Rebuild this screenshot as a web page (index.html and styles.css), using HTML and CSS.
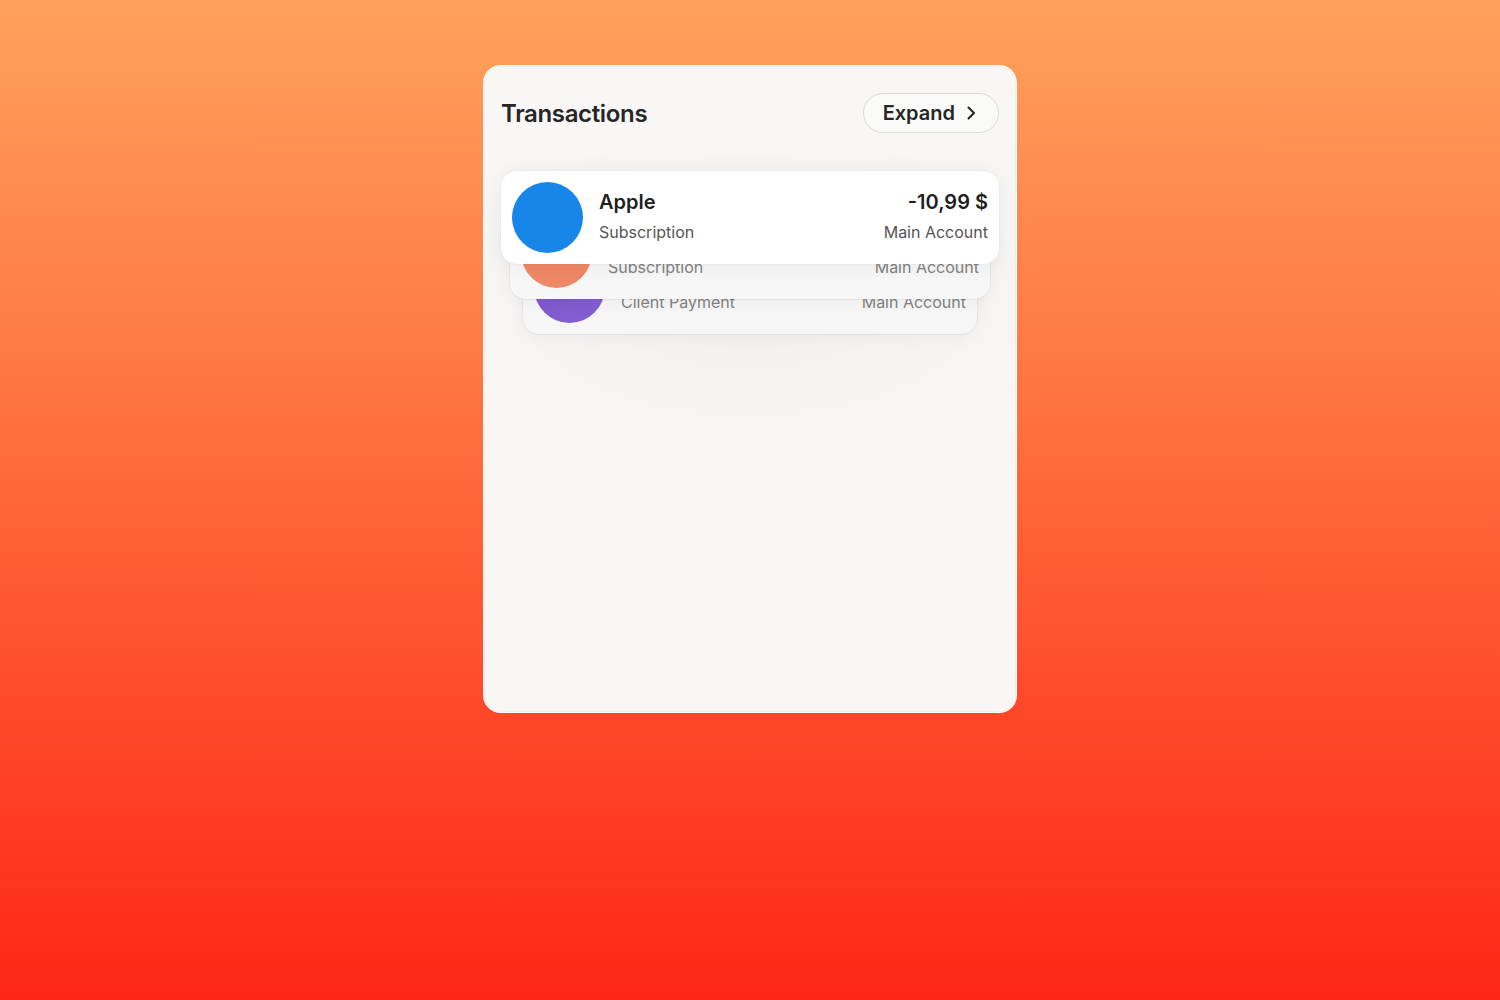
FILE: index.html
```html
<!DOCTYPE html>
<html lang="en">
<head>
<meta charset="utf-8">
<title>Transactions</title>
<link rel="stylesheet" href="styles.css">
</head>
<body>
  <main class="panel">
    <header class="panel-head">
      <h1 class="panel-title">Transactions</h1>
      <button class="expand-btn" type="button">
        <span>Expand</span>
        <svg class="chev" width="12" height="16" viewBox="0 0 12 16" aria-hidden="true"><path d="M3.5 2.5 L9 8 L3.5 13.5" fill="none" stroke="#222" stroke-width="2" stroke-linecap="round" stroke-linejoin="round"/></svg>
      </button>
    </header>
    <section class="stack">
      <article class="tx tx-back2">
        <span class="avatar avatar-purple"></span>
        <div class="tx-main"><span class="tx-name">Freelance</span><span class="tx-sub">Client Payment</span></div>
        <div class="tx-side"><span class="tx-amt">+450,00 $</span><span class="tx-sub">Main Account</span></div>
      </article>
      <article class="tx tx-back1">
        <span class="avatar avatar-orange"></span>
        <div class="tx-main"><span class="tx-name">Spotify</span><span class="tx-sub">Subscription</span></div>
        <div class="tx-side"><span class="tx-amt">-9,99 $</span><span class="tx-sub">Main Account</span></div>
      </article>
      <article class="tx tx-front">
        <span class="avatar avatar-blue"></span>
        <div class="tx-main"><span class="tx-name">Apple</span><span class="tx-sub">Subscription</span></div>
        <div class="tx-side"><span class="tx-amt">-10,99 $</span><span class="tx-sub">Main Account</span></div>
      </article>
    </section>
  </main>
</body>
</html>
```
FILE: styles.css
```css
* { box-sizing: border-box; }
html, body { height: 100%; }
body {
  margin: 0;
  min-height: 1000px;
  background: linear-gradient(180deg, #ffa15b 0%, #ff7a44 35%, #ff4a2a 70%, #fe2616 100%);
  font-family: Inter, "Noto Sans", "Liberation Sans", sans-serif;
  color: #222;
}
.panel {
  width: 534px;
  height: 648px;
  margin: 65px auto 0;
  background: #f8f7f6;
  border: 1px solid rgba(255,255,255,0.75);
  border-radius: 18px;
  padding: 27px 17px;
  background-image: radial-gradient(ellipse 340px 170px at 50% 230px, rgba(0,0,0,0.03), rgba(0,0,0,0) 100%);
  box-shadow: inset 0 0 0 1px rgba(0,0,0,0.03);
}
.panel-head {
  display: flex;
  align-items: center;
  justify-content: space-between;
  height: 40px;
}
.panel-title {
  margin: 0;
  font-size: 24px;
  font-weight: 600;
  letter-spacing: -0.35px;
  color: #262626;
}
.expand-btn {
  display: flex;
  align-items: center;
  gap: 10px;
  height: 40px;
  padding: 0 21px 0 19px;
  border: 1px solid #dcdbda;
  border-radius: 20px;
  background: rgba(255,255,255,0.35);
  font-family: inherit;
  font-size: 20px;
  font-weight: 600;
  color: #262626;
}
.chev { display: block; }
.stack {
  display: grid;
  margin-top: 38px;
}
.tx {
  grid-area: 1 / 1;
  display: flex;
  align-items: center;
  height: 93px;
  padding: 11px;
  border-radius: 16px;
  background: #fff;
}
.tx-front {
  z-index: 3;
  box-shadow: 0 2px 22px rgba(0,0,0,0.06), 0 0 0 1px rgba(0,0,0,0.02);
}
.tx-back1 {
  z-index: 2;
  margin: 35px 9px 0;
  background: #f7f7f7;
  box-shadow: 0 3px 18px rgba(0,0,0,0.045), 0 0 0 1px rgba(0,0,0,0.045);
}
.tx-back2 {
  z-index: 1;
  margin: 70px 22px 0;
  background: #f6f6f6;
  box-shadow: 0 3px 18px rgba(0,0,0,0.04), 0 0 0 1px rgba(0,0,0,0.045);
}
.tx-back1 .tx-sub, .tx-back2 .tx-sub { color: #828282; }
.tx-back1 .tx-name, .tx-back1 .tx-amt,
.tx-back2 .tx-name, .tx-back2 .tx-amt { visibility: hidden; }
.avatar {
  flex: none;
  width: 71px;
  height: 71px;
  border-radius: 50%;
}
.avatar-blue { background: #1786e8; }
.avatar-orange { background: #ef8866; }
.avatar-purple { background: linear-gradient(135deg, #7a54cc, #8660d2); }
.tx-main, .tx-side {
  display: flex;
  flex-direction: column;
  gap: 8px;
  padding-bottom: 3px;
}
.tx-main { margin-left: 16px; flex: 1; }
.tx-side { align-items: flex-end; }
.tx-name, .tx-amt {
  font-size: 20px;
  font-weight: 600;
  line-height: 24px;
  color: #1f1f1f;
}
.tx-sub {
  font-size: 16px;
  line-height: 20px;
  color: #555;
}
```
